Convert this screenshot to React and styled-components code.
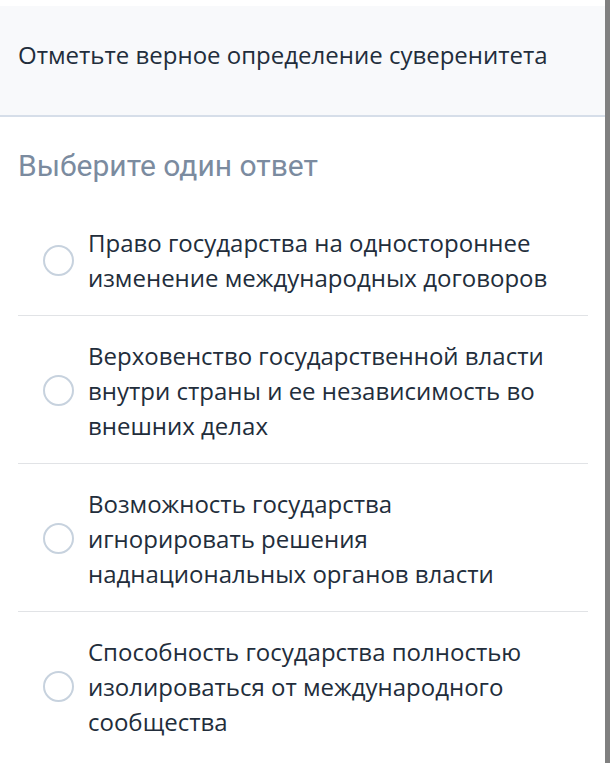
import React from 'react'
import styled, { createGlobalStyle } from 'styled-components'

const GlobalStyle = createGlobalStyle`
  html, body {
    margin: 0;
    padding: 0;
    background: #ffffff;
  }
  * {
    box-sizing: border-box;
  }
`

const Screen = styled.div`
  display: flex;
  height: 100vh;
  overflow: hidden;
  background: #ffffff;
`

const Content = styled.div`
  flex: 1;
  display: flex;
  flex-direction: column;
  padding-top: 6px;
`

const ScrollBar = styled.div`
  width: 5px;
  margin-right: 4px;
  background: #808080;
`

const Header = styled.div`
  height: 111px;
  display: flex;
  align-items: center;
  padding: 0 18px 12px;
  background: #f8f9fb;
  border-bottom: 2px solid #d6dee9;
`

const Question = styled.h1`
  margin: 0;
  font-family: "Open Sans", "Noto Sans", sans-serif;
  font-weight: 400;
  font-size: 24px;
  color: #222d3b;
`

const Hint = styled.h2`
  margin: 32px 0 0;
  padding: 0 18px;
  font-family: Roboto, "Noto Sans", sans-serif;
  font-weight: 400;
  font-size: 30px;
  line-height: 34px;
  color: #7b8b9f;
`

const List = styled.ul`
  list-style: none;
  margin: 20px 0 0;
  padding: 0 17px 0 18px;
`

const Option = styled.li`
  display: flex;
  align-items: center;
  gap: 14px;
  padding: 22px 0 20px 25px;
  border-bottom: ${p => (p.last ? 'none' : '1px solid #e1e3e6')};
  cursor: pointer;
`

const Radio = styled.span`
  flex: none;
  width: 31px;
  height: 31px;
  border-radius: 50%;
  border: 2px solid #c7d2de;
  background: #ffffff;
`

const Label = styled.span`
  font-family: "Open Sans", "Noto Sans", sans-serif;
  font-size: 24px;
  line-height: 35px;
  color: #222d3b;
`

const answers = [
  ['Право государства на одностороннее', 'изменение международных договоров'],
  ['Верховенство государственной власти', 'внутри страны и ее независимость во', 'внешних делах'],
  ['Возможность государства', 'игнорировать решения', 'наднациональных органов власти'],
  ['Способность государства полностью', 'изолироваться от международного', 'сообщества'],
]

export default function App() {
  return (
    <Screen>
      <GlobalStyle />
      <Content>
        <Header>
          <Question>Отметьте верное определение суверенитета</Question>
        </Header>
        <Hint>Выберите один ответ</Hint>
        <List>
          {answers.map((lines, i) => (
            <Option key={i} last={i === answers.length - 1}>
              <Radio />
              <Label>
                {lines.map((l, j) => (
                  <React.Fragment key={j}>
                    {l}
                    {j < lines.length - 1 && <br />}
                  </React.Fragment>
                ))}
              </Label>
            </Option>
          ))}
        </List>
      </Content>
      <ScrollBar />
    </Screen>
  )
}
